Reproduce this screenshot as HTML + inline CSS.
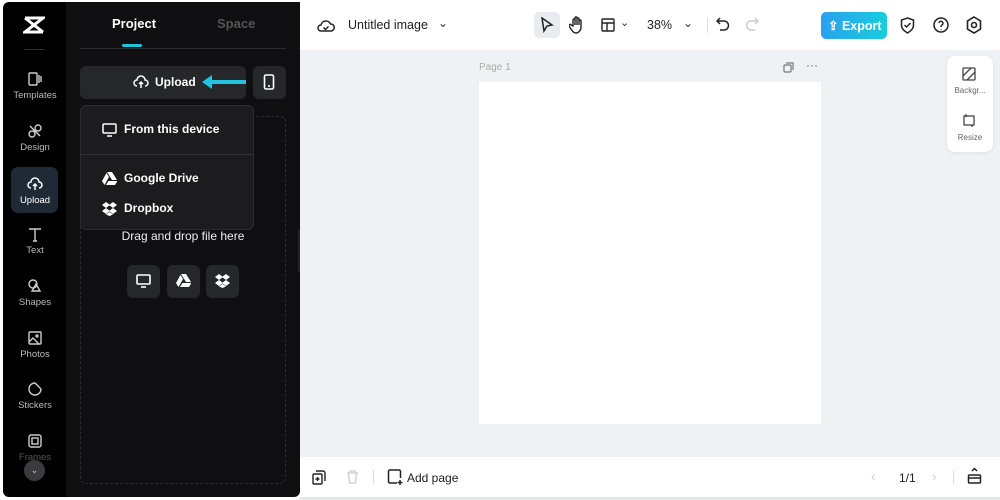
<!DOCTYPE html><html><head><style>
*{margin:0;padding:0;box-sizing:border-box}
body{width:1000px;height:500px;background:#fff;font-family:"Liberation Sans",sans-serif;position:relative;overflow:hidden}
.a{position:absolute}
.side{left:3px;top:2px;width:64px;height:495px;background:#000;border-radius:6px 0 0 6px}
.panel{left:66px;top:2px;width:234px;height:495px;background:#0f0f11;border-radius:0 0 6px 0}
.ni{position:absolute;left:0;width:64px;text-align:center;color:#bbb;font-size:9.5px}
.ni svg{display:block;margin:0 auto 3px}
.w{color:#fff;font-weight:bold}
.ib{position:absolute;width:33px;height:33px;background:#26272b;border-radius:6px}
</style></head><body>
<div class="a side"></div>
<div class="a panel"></div>
<svg class="a" style="left:23px;top:16px" width="22" height="18" viewBox="0 0 22 18"><path d="M2 2h18L2 16h18M2 2l18 14" stroke="#fff" stroke-width="3" fill="none"/></svg>
<div class="a" style="left:24px;top:49px;width:20px;height:1px;background:#333"></div>
<div class="ni" style="top:71px;left:3px"><svg width="16" height="16" viewBox="0 0 16 16" fill="none" stroke="#ccc" stroke-width="1.4"><rect x="2" y="2" width="8" height="12" rx="1"/><path d="M12 4v8M14 5v6"/></svg>Templates</div>
<div class="ni" style="top:123px;left:3px"><svg width="16" height="16" viewBox="0 0 16 16" fill="none" stroke="#ccc" stroke-width="1.4"><circle cx="5" cy="11" r="3"/><circle cx="11" cy="5" r="3"/><path d="M3 3l10 10"/></svg>Design</div>
<div class="a" style="left:11px;top:167px;width:47px;height:46px;background:#1f2a36;border-radius:7px"></div>
<div class="ni w" style="top:176px;left:3px;font-weight:normal;color:#fff"><svg width="16" height="16" viewBox="0 0 16 16" fill="none" stroke="#fff" stroke-width="1.5"><path d="M4 12a3 3 0 010-6 4 4 0 018 0 3 3 0 010 6M8 14V8M6 10l2-2 2 2"/></svg>Upload</div>
<div class="ni" style="top:226px;left:3px"><svg width="16" height="16" viewBox="0 0 16 16" fill="none" stroke="#ccc" stroke-width="1.4"><path d="M2 3h12M8 3v12M6 15h4"/></svg>Text</div>
<div class="ni" style="top:278px;left:3px"><svg width="16" height="16" viewBox="0 0 16 16" fill="none" stroke="#ccc" stroke-width="1.4"><circle cx="6" cy="6" r="4"/><path d="M9 6l4 7H5z"/></svg>Shapes</div>
<div class="ni" style="top:330px;left:3px"><svg width="16" height="16" viewBox="0 0 16 16" fill="none" stroke="#ccc" stroke-width="1.4"><rect x="2" y="2" width="12" height="12" rx="1"/><path d="M2 12l4-4 6 6"/><circle cx="10" cy="6" r="1"/></svg>Photos</div>
<div class="ni" style="top:381px;left:3px"><svg width="16" height="16" viewBox="0 0 16 16" fill="none" stroke="#ccc" stroke-width="1.4"><path d="M14 8A6 6 0 118 2l6 6z"/></svg>Stickers</div>
<div class="ni" style="top:433px;left:3px;color:#555"><svg width="16" height="16" viewBox="0 0 16 16" fill="none" stroke="#ccc" stroke-width="1.4"><rect x="2" y="2" width="12" height="12" rx="2"/><rect x="5" y="5" width="6" height="6"/></svg>Frames</div>
<div class="a" style="left:24px;top:460px;width:21px;height:21px;border-radius:50%;background:#3a3b3f;color:#ccc;font-size:9px;text-align:center;line-height:21px">&#8964;</div>
<div class="a w" style="left:112px;top:16px;font-size:13px">Project</div>
<div class="a" style="left:217px;top:16px;font-size:13px;color:#555;font-weight:bold">Space</div>
<div class="a" style="left:122px;top:44px;width:20px;height:3px;background:#22c4dc;border-radius:2px"></div>
<div class="a" style="left:80px;top:48px;width:206px;height:1px;background:#2a2a2d"></div>
<div class="a" style="left:80px;top:66px;width:166px;height:33px;background:#26272b;border-radius:6px"></div>
<svg class="a" style="left:133px;top:74px" width="16" height="16" viewBox="0 0 16 16" fill="none" stroke="#fff" stroke-width="1.5"><path d="M4 12a3 3 0 010-6 4 4 0 018 0 3 3 0 010 6M8 14V8M6 10l2-2 2 2"/></svg>
<div class="a w" style="left:155px;top:75px;font-size:12px">Upload</div>
<svg class="a" style="left:202px;top:75px" width="44" height="14"><path d="M0 7l10-7v14z" fill="#22c4dc"/><rect x="9" y="5" width="35" height="4" fill="#22c4dc"/></svg>
<div class="ib" style="left:253px;top:66px"></div>
<svg class="a" style="left:263px;top:74px" width="12" height="17" fill="none" stroke="#fff" stroke-width="1.6"><rect x="1.5" y="1" width="9" height="14" rx="1.5"/><path d="M5 12h2"/></svg>
<div class="a" style="left:80px;top:116px;width:206px;height:368px;border:1px dashed #2c2c30;border-radius:6px"></div>
<div class="a" style="left:80px;top:229px;width:206px;text-align:center;font-size:12px;color:#eee">Drag and drop file here</div>
<div class="ib" style="left:127px;top:265px"></div><div class="ib" style="left:167px;top:265px"></div><div class="ib" style="left:206px;top:265px"></div>
<svg class="a" style="left:136px;top:274px" width="15" height="14" fill="none" stroke="#fff" stroke-width="1.6"><rect x="1" y="1" width="13" height="9" rx="1"/><path d="M5 13h5"/></svg>
<svg class="a" style="left:176px;top:274px" width="15" height="13"><path d="M5 0h5l5 8h-5zM4.5 1L0 9l2.5 4 4.5-8zM4 13h9l2.5-4h-9z" fill="#fff"/></svg>
<svg class="a" style="left:215px;top:274px" width="15" height="14" fill="#fff"><path d="M4 0L0 3l4 3 4-3zM11 0l-4 3 4 3 4-3zM0 9l4 3 4-3-4-3zM15 9l-4-3-4 3 4 3zM4 12.5l3.5 1.5 3.5-1.5-3.5-2.5z"/></svg>
<div class="a" style="left:80px;top:105px;width:174px;height:125px;background:#1c1c1f;border:1px solid #2c2c30;border-radius:6px"></div>
<div class="a" style="left:80px;top:154px;width:174px;height:1px;background:#333"></div>
<svg class="a" style="left:102px;top:123px" width="15" height="14" fill="none" stroke="#fff" stroke-width="1.5"><rect x="1" y="1" width="13" height="9" rx="1"/><path d="M5 13h5"/></svg>
<div class="a w" style="left:124px;top:122px;font-size:12px">From this device</div>
<svg class="a" style="left:102px;top:172px" width="15" height="13"><path d="M5 0h5l5 8h-5zM4.5 1L0 9l2.5 4 4.5-8zM4 13h9l2.5-4h-9z" fill="#fff"/></svg>
<div class="a w" style="left:124px;top:171px;font-size:12px">Google Drive</div>
<svg class="a" style="left:102px;top:202px" width="15" height="14" fill="#fff"><path d="M4 0L0 3l4 3 4-3zM11 0l-4 3 4 3 4-3zM0 9l4 3 4-3-4-3zM15 9l-4-3-4 3 4 3zM4 12.5l3.5 1.5 3.5-1.5-3.5-2.5z"/></svg>
<div class="a w" style="left:124px;top:201px;font-size:12px">Dropbox</div>
<div class="a" style="left:298px;top:230px;width:6px;height:42px;background:#222;border-radius:0 4px 4px 0"></div>
<div class="a" style="left:300px;top:50px;width:700px;height:407px;background:#eff2f5"></div>
<div class="a" style="left:479px;top:82px;width:342px;height:342px;background:#fff"></div>
<div class="a" style="left:479px;top:62px;font-size:10px;color:#aaa">Page 1</div>
<div class="a" style="left:806px;top:58px;font-size:12px;color:#666">···</div>
<svg class="a" style="left:783px;top:62px" width="11" height="11" fill="none" stroke="#777" stroke-width="1.2"><rect x="1" y="3" width="7" height="7" rx="1"/><path d="M3 1h7v7"/></svg>
<div class="a" style="left:947px;top:56px;width:46px;height:96px;background:#fff;border-radius:8px;box-shadow:0 1px 4px rgba(0,0,0,.08)"></div>
<svg class="a" style="left:962px;top:67px" width="14" height="14" fill="none" stroke="#444" stroke-width="1.3"><rect x="1" y="1" width="12" height="12" rx="1"/><path d="M1 9l8-8M5 13l8-8"/></svg>
<div class="a" style="left:947px;top:86px;width:46px;text-align:center;font-size:8px;color:#666">Backgr...</div>
<svg class="a" style="left:962px;top:113px" width="14" height="14" fill="none" stroke="#444" stroke-width="1.3"><rect x="2" y="3" width="10" height="9"/><path d="M4 1v3M10 12v2"/></svg>
<div class="a" style="left:947px;top:133px;width:46px;text-align:center;font-size:8px;color:#666">Resize</div>
<svg class="a" style="left:317px;top:18px" width="18" height="16" fill="none" stroke="#222" stroke-width="1.5"><path d="M4 13a3 3 0 010-6 5 5 0 019.5-1A3.5 3.5 0 0114 13z"/><path d="M6.5 9.5l2 2 3-3"/></svg>
<div class="a" style="left:348px;top:18px;font-size:12.5px;color:#222">Untitled image</div>
<div class="a" style="left:438px;top:16px;font-size:12px;color:#333">&#8964;</div>
<div class="a" style="left:534px;top:12px;width:26px;height:26px;background:#e8ebef;border-radius:5px"></div>
<svg class="a" style="left:540px;top:17px" width="14" height="16" fill="none" stroke="#222" stroke-width="1.5"><path d="M2 1l10 7-5 1-3 5z"/></svg>
<svg class="a" style="left:569px;top:16px" width="15" height="18" fill="none" stroke="#222" stroke-width="1.4"><path d="M4 10V4a1 1 0 012 0v5V2a1 1 0 012 0v7V3a1 1 0 012 0v6-4a1 1 0 012 0v6c0 4-3 6-5 6s-3-1-5-4l-2-3a1 1 0 012-1z"/></svg>
<svg class="a" style="left:601px;top:18px" width="14" height="14" fill="none" stroke="#222" stroke-width="1.4"><rect x="1" y="1" width="12" height="12" rx="1"/><path d="M1 5h12M6 5v8"/></svg>
<div class="a" style="left:620px;top:16px;font-size:11px;color:#333">&#8964;</div>
<div class="a" style="left:647px;top:18px;font-size:12.5px;color:#222">38%</div>
<div class="a" style="left:683px;top:16px;font-size:12px;color:#333">&#8964;</div>
<div class="a" style="left:707px;top:18px;width:1px;height:15px;background:#ddd"></div>
<svg class="a" style="left:716px;top:17px" width="14" height="15" fill="none" stroke="#222" stroke-width="1.5"><path d="M4 1L1 4l3 3M1 4h7a4.5 4.5 0 010 9H4"/></svg>
<svg class="a" style="left:745px;top:17px" width="14" height="15" fill="none" stroke="#ccc" stroke-width="1.5"><path d="M10 1l3 3-3 3M13 4H6a4.5 4.5 0 000 9h4"/></svg>
<div class="a" style="left:821px;top:12px;width:66px;height:27px;border-radius:5px;background:linear-gradient(90deg,#2c9ff0,#19cde0)"></div>
<div class="a" style="left:828px;top:18px;font-size:12.5px;color:#fff;font-weight:bold">⇪ Export</div>
<svg class="a" style="left:900px;top:17px" width="15" height="17" fill="none" stroke="#222" stroke-width="1.5"><path d="M7.5 1l6 2v5c0 4-3 6-6 8-3-2-6-4-6-8V3z"/><path d="M4.5 8l2 2 4-4"/></svg>
<svg class="a" style="left:933px;top:17px" width="16" height="16" fill="none" stroke="#222" stroke-width="1.5"><circle cx="8" cy="8" r="7"/><path d="M6 6a2 2 0 113 2c-1 .5-1 1-1 2M8 12v.5"/></svg>
<svg class="a" style="left:966px;top:16px" width="16" height="18" fill="none" stroke="#222" stroke-width="1.6"><path d="M8 1l6.5 4v8L8 17l-6.5-4V5z"/><circle cx="8" cy="9" r="2.5"/></svg>
<div class="a" style="left:300px;top:497px;width:700px;height:3px;background:#e4e6e9"></div>
<svg class="a" style="left:312px;top:470px" width="14" height="15" fill="none" stroke="#222" stroke-width="1.4"><rect x="1" y="4" width="9" height="10" rx="1"/><path d="M4 1h7a2 2 0 012 2v8M5.5 7v4M3.5 9h4"/></svg>
<svg class="a" style="left:346px;top:470px" width="13" height="14" fill="none" stroke="#ccc" stroke-width="1.3"><path d="M1 3h11M4 3V1h5v2M2.5 3l1 10h6l1-10"/></svg>
<div class="a" style="left:373px;top:470px;width:1px;height:14px;background:#ddd"></div>
<svg class="a" style="left:387px;top:469px" width="16" height="16" fill="none" stroke="#222" stroke-width="1.5"><path d="M10 14H3a1.5 1.5 0 01-1.5-1.5v-10A1.5 1.5 0 013 1h9a1.5 1.5 0 011.5 1.5V9M13 11v5M10.5 13.5h5"/></svg>
<div class="a" style="left:407px;top:471px;font-size:12px;color:#222">Add page</div>
<div class="a" style="left:871px;top:469px;font-size:13px;color:#ccc">&#8249;</div>
<div class="a" style="left:899px;top:471px;font-size:12px;color:#222">1/1</div>
<div class="a" style="left:932px;top:469px;font-size:13px;color:#ccc">&#8250;</div>
<div class="a" style="left:953px;top:470px;width:1px;height:14px;background:#ddd"></div>
<svg class="a" style="left:967px;top:467px" width="15" height="18" fill="none" stroke="#222" stroke-width="1.5"><path d="M5 4l2.5-2.5L10 4"/><rect x="1.5" y="8" width="12" height="8" rx="1"/><path d="M1.5 11h12"/></svg>
</body></html>
